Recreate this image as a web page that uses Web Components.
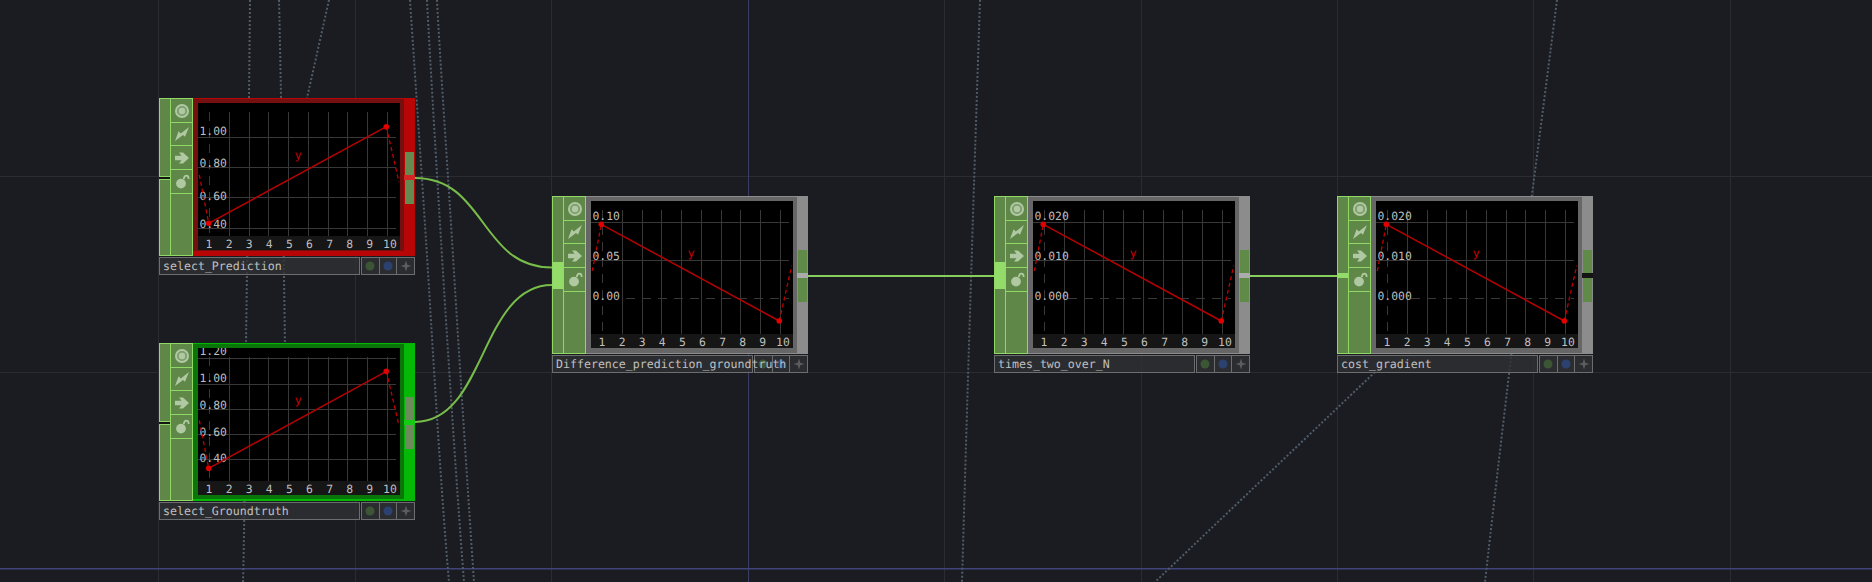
<!doctype html>
<html><head><meta charset="utf-8">
<style>
html,body{margin:0;padding:0;background:#1b1c21;overflow:hidden}
td-canvas{font-family:"DejaVu Sans Mono",monospace}
</style></head><body>
<template id="canvas-t">
<style>
:host{display:block;position:relative;width:1872px;height:582px;background:#1b1c21;overflow:hidden}
svg{display:block;position:absolute;inset:0}
.grid{stroke:#2a2c32;stroke-width:1;shape-rendering:crispEdges}
.axis{stroke:#3a3d63;stroke-width:1;shape-rendering:crispEdges}
.axis2{stroke:#40447a;stroke-width:1.5;}
.dot{fill:none;stroke:#4f5c69;stroke-width:2;stroke-dasharray:2 2}
.wire{fill:none;stroke:#78bd4a;stroke-width:2}
.wire2{fill:none;stroke:#86cf5c;stroke-width:2;shape-rendering:crispEdges}
</style>
<svg width="1872" height="582" viewBox="0 0 1872 582">
 <g class="grid" id="g"></g>
 <line class="axis" x1="748.5" y1="0" x2="748.5" y2="582"/>
 <line class="axis2" x1="0" y1="568.8" x2="1872" y2="568.8"/>
 <path class="dot" d="M250 0C249.500 50 249 98 248.500 150S246 343 246 343S245 510 243 582"/>
 <path class="dot" d="M279 0C280 40 281 98 282 150S285 343 285 350"/>
 <path class="dot" d="M329 0L307 98"/>
 <path class="dot" d="M410 0C414 60 421.700 174 426 240S440 480 449 582"/>
 <path class="dot" d="M427 0C430 60 437 174 441 240S456 480 464 582"/>
 <path class="dot" d="M437 0C440 60 448 174 452 240S467 480 474 582"/>
 <path class="dot" d="M980 0C978 60 970 300 962 582"/>
 <path class="dot" d="M1375 372L1155 582"/>
 <path class="dot" d="M1557 0C1548 70 1532 196 1522 270S1492 520 1485 582"/>
 <path class="wire" d="M415 178C486 178 480 267.500 552 267.500"/>
 <path class="wire" d="M415 422C486 422 480 285 552 285"/>
 <path class="wire2" d="M808 276H994"/>
 <path class="wire2" d="M1250 276H1337"/>
</svg>
<slot></slot>
</template>

<template id="node-t">
<style>
:host{display:flex;flex-direction:column;gap:1px;position:absolute;width:256px;color:#c0c0c0;font:11.6px "DejaVu Sans Mono",monospace;text-rendering:geometricPrecision}
.body{display:flex;height:158px}
.inputs{width:11px;display:flex;flex-direction:column;box-sizing:border-box;border:1px solid #90d966;border-right:0}
.seg{flex:none;background:#5f8748}
.seg.fill{flex:1}
.seg.gap{background:#141414;border-top:1px solid #90d966;border-bottom:1px solid #90d966;box-sizing:border-box;margin:0 0 0 -1px}
.seg.bright{background:#93dc6a}
.icons{width:23px;flex:none;box-sizing:border-box;background:#5f8748;border:1px solid #90d966;display:flex;flex-direction:column}
.cell{flex:none;box-sizing:border-box;height:24px;border-bottom:1px solid #90d966;display:flex;align-items:center;justify-content:center}
.cell svg{display:block;fill:#b0c9a2;filter:blur(.4px)}
.frame{flex:1;min-width:0;box-sizing:border-box;background:var(--frame);border-top:1px solid var(--main);border-bottom:var(--bb) solid var(--main);padding:4px 4px 0 5px;display:flex}
.out{width:11px;flex:none;background:var(--main);display:flex;flex-direction:column;align-items:center;box-sizing:border-box;padding-top:54px}
.patch{width:9px;height:23px;background:var(--patch);flex:none}
.patch.b{height:24px}
.link{height:5px;width:11px;background:var(--link);flex:none}
.foot{display:flex;gap:1px;height:18px}
.name{width:201px;flex:none;box-sizing:border-box;border:1px solid #6c6d6f;background:rgba(48,49,51,.8);padding:1px 3px 0;line-height:15px;white-space:nowrap;position:relative;z-index:2}
.btns{flex:1;display:flex;box-sizing:border-box;border:1px solid #6c6d6f;background:rgba(48,49,51,.8)}
.btn{flex:1;display:flex;align-items:center;justify-content:center;border-right:1px solid #6c6d6f}
.btn:last-child{border-right:0}
.btn svg{display:block;filter:blur(.6px)}
</style>
<div class="body">
 <div class="inputs" id="inputs"></div>
 <div class="icons">
  <div class="cell"><svg width="16" height="16" viewBox="0 0 16 16"><circle cx="8" cy="8" r="5" fill="#7f9f70"/><path fill-rule="evenodd" d="M8 1a7 7 0 1 0 0 14A7 7 0 0 0 8 1zm0 2a5 5 0 1 1 0 10 5 5 0 0 1 0-10z"/><circle cx="8" cy="8" r="3.200"/></svg></div>
  <div class="cell" style="height:23px"><svg width="16" height="16" viewBox="0 0 16 16"><path d="M15 1L6.800 7.400 4.600 5.300 1 15 9 8.900 11 10.800Z"/></svg></div>
  <div class="cell"><svg width="16" height="16" viewBox="0 0 16 16"><path d="M1 5.800H7.500L5 2.500H9L15 8 9 13.500H5L7.500 10.200H1Z"/></svg></div>
  <div class="cell"><svg width="16" height="16" viewBox="0 0 16 16"><circle cx="7" cy="9.600" r="4.900"/><path d="M9.700 5.200C10 2.800 11 1.600 12.400 1.600S14.700 3 14.700 5" fill="none" stroke="#b0c9a2" stroke-width="1.700"/></svg></div>
 </div>
 <div class="frame"><td-viewer id="v"></td-viewer></div>
 <div class="out"><div class="patch" id="p1"></div><div class="link"></div><div class="patch b" id="p2"></div></div>
</div>
<div class="foot">
 <div class="name"><slot></slot></div>
 <div class="btns">
  <div class="btn"><svg width="12" height="12"><circle cx="6" cy="6" r="4.500" fill="#3b5535"/></svg></div>
  <div class="btn"><svg width="12" height="12"><circle cx="6" cy="6" r="4.500" fill="#2b4270"/></svg></div>
  <div class="btn"><svg width="12" height="12" viewBox="0 0 12 12"><path d="M6 0.500L7.300 4.700 11.500 6 7.300 7.300 6 11.500 4.700 7.300 .5 6 4.700 4.700Z" fill="#5c5d5f"/></svg></div>
 </div>
</div>
</template>

<script>
const NS='http://www.w3.org/2000/svg';
class TdCanvas extends HTMLElement{
 constructor(){super();const r=this.attachShadow({mode:'open'});
  r.appendChild(document.importNode(document.getElementById('canvas-t').content,true));
  const g=r.getElementById('g');
  const add=(a,b,c,d)=>{const l=document.createElementNS(NS,'line');l.setAttribute('x1',a);l.setAttribute('y1',b);l.setAttribute('x2',c);l.setAttribute('y2',d);g.appendChild(l)};
  [158.5,355.5,551.5,944.5,1141.5,1337.5,1533.5,1730.5].forEach(x=>add(x,0,x,582));
  [176.5,372.5].forEach(y=>add(0,y,1872,y));
 }
}
class TdViewer extends HTMLElement{
 constructor(){super();this.attachShadow({mode:'open'})}
 setData(d){
  const xs=[];for(let k=0;k<10;k++)xs.push(Math.round(11+19.75*k)+.5);
  let s='<style>:host{display:block;width:202px;height:147px;background:#000;flex:none}svg{display:block}text{font:11.4px "DejaVu Sans Mono",monospace;fill:#bebebe;text-rendering:geometricPrecision}.t{text-anchor:middle}.g{stroke:#383838;stroke-width:1;shape-rendering:crispEdges}.y{fill:#c00000;text-anchor:middle;font-size:12px}</style>';
  s+='<svg width="202" height="147" viewBox="0 0 202 147">';
  xs.forEach((x,i)=>{s+=`<line class="g" x1="${x}" x2="${x}" y1="9" y2="133" ${i==0?'stroke-dasharray="9 7"':''}/>`});
  d.h.forEach(y=>{s+=`<line class="g" x1="0" x2="198" y1="${y}" y2="${y}"/>`});
  if(d.zero!=null)s+=`<line class="g" x1="35" x2="198" y1="${d.zero}" y2="${d.zero}" stroke-dasharray="9 7"/>`;
  s+='<rect x="0" y="133" width="202" height="14" fill="#161616"/>';
  d.labels.forEach(([t,y])=>{s+=`<text x="1.500" y="${y}">${t}</text>`});
  for(let k=0;k<10;k++)s+=`<text class="t" x="${11+20.1*k}" y="144.500">${k+1}</text>`;
  s+=`<text class="y" x="100" y="55.500">y</text>`;
  const [a,b]=d.p;
  s+=`<path d="M${d.l[0]} ${d.l[1]}L${a[0]} ${a[1]}M${b[0]} ${b[1]}L${d.r[0]} ${d.r[1]}" fill="none" stroke="#c00000" stroke-width="1.300" stroke-dasharray="4 3"/>`;
  s+=`<path d="M${a[0]} ${a[1]}L${b[0]} ${b[1]}" fill="none" stroke="#b80000" stroke-width="1.500"/>`;
  s+=`<circle cx="${a[0]}" cy="${a[1]}" r="2.800" fill="#e00000"/><circle cx="${b[0]}" cy="${b[1]}" r="2.800" fill="#e00000"/>`;
  s+='</svg>';
  this.shadowRoot.innerHTML=s;
 }
}
const THEMES={
 red:{main:'#b80606',frame:'#761010',patch:'#648a50',link:'#d42424',bb:'5px'},
 green:{main:'#06b806',frame:'#0a760a',patch:'#6d8a5c',link:'#14cc14',bb:'2px'},
 grey:{main:'#8c8c8c',frame:'#666666',patch:'#5f8a48',link:'#ababab',bb:'1px'},
 greyd:{main:'#8c8c8c',frame:'#666666',patch:'#5f8a48',link:'#141414',bb:'1px'}
};
const DATA={
 p:{h:[34.5,64.5,94.5,125.5],labels:[['1.00',32],['0.80',64],['0.60',97],['0.40',125]],p:[[10.7,120.3],[188.3,23.7]],l:[1.3,72],r:[201,79]},
 g:{h:[10.5,36.5,61.5,86.5,111.5],labels:[['1.20',7],['1.00',33.7],['0.80',61],['0.60',87.7],['0.40',114]],p:[[10.7,120.3],[188.3,23.3]],l:[1.3,72.5],r:[201,77.5]},
 d1:{h:[21.5,59.5],zero:97.5,labels:[['0.10',19],['0.05',59],['0.00',99]],p:[[10.3,23.3],[188.3,120]],l:[1.3,70],r:[200.7,64.7]},
 d2:{h:[21.5,59.5],zero:97.5,labels:[['0.020',19],['0.010',59],['0.000',99]],p:[[10.3,23.3],[188.3,120]],l:[1.3,70],r:[200.7,64.7]}
};
customElements.define('td-viewer',TdViewer);
class TdNode extends HTMLElement{
 constructor(){super();const r=this.attachShadow({mode:'open'});
  r.appendChild(document.importNode(document.getElementById('node-t').content,true));}
 connectedCallback(){
  const r=this.shadowRoot,t=THEMES[this.getAttribute('theme')];
  this.style.left=this.getAttribute('x')+'px';this.style.top=this.getAttribute('y')+'px';
  for(const k of ['main','frame','patch','link','bb'])this.style.setProperty('--'+k,t[k]);
  const inp=r.getElementById('inputs'),m=this.getAttribute('inputs').split(',');
  const seg=(c,h)=>{const e=document.createElement('div');e.className='seg '+c;if(h)e.style.height=h+'px';inp.appendChild(e)};
  if(m[0]=='gap'){seg('',+m[1]);seg('gap',4);seg('fill')}
  else{seg('',+m[0]);seg('bright',+m[1]);seg('fill')}
  r.getElementById('v').setData(DATA[this.getAttribute('plot')]);
 }
}
customElements.define('td-node',TdNode);
customElements.define('td-canvas',TdCanvas);
</script>
<td-canvas>
 <td-node x="159" y="98" theme="red" plot="p" inputs="gap,77">select_Prediction</td-node>
 <td-node x="159" y="343" theme="green" plot="g" inputs="gap,77">select_Groundtruth</td-node>
 <td-node x="552" y="196" theme="grey" plot="d1" inputs="65,27">Difference_prediction_groundtruth</td-node>
 <td-node x="994" y="196" theme="grey" plot="d2" inputs="65,27">times_two_over_N</td-node>
 <td-node x="1337" y="196" theme="greyd" plot="d2" inputs="76,5">cost_gradient</td-node>
</td-canvas>
</body></html>
